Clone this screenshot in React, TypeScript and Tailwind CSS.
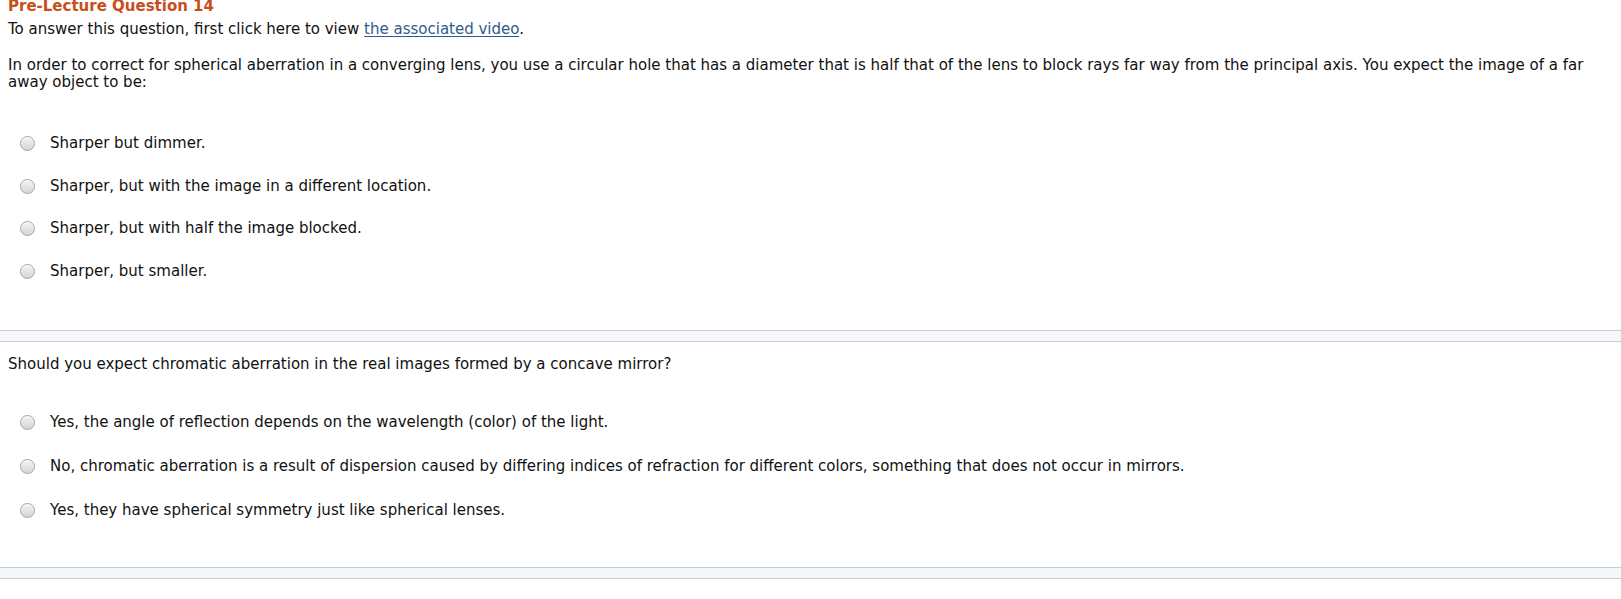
import React from "react";

const font = { fontFamily: '"DejaVu Sans", Verdana, sans-serif' };

type Question = {
  prompt: React.ReactNode;
  options: string[];
};

function Radio() {
  return (
    <span className="mb-[1px] ml-[20px] mr-[15px] h-[15px] w-[15px] shrink-0 rounded-full border border-[#a3a3a3] bg-gradient-to-b from-[#f3f3f3] to-[#d6d6d6] shadow-[inset_0_1px_1px_rgba(255,255,255,0.9)]" />
  );
}

function Options({ options, rowClass }: { options: string[]; rowClass: string }) {
  return (
    <div>
      {options.map((o) => (
        <label key={o} className={`flex items-center text-[15px] leading-[17.5px] text-[#111] ${rowClass}`}>
          <Radio />
          <span>{o}</span>
        </label>
      ))}
    </div>
  );
}

function Band() {
  return <div className="h-[12px] w-full border-y border-[#c7cdd7] bg-[#f4f8fb]" />;
}

export default function App() {
  const first: Question = {
    prompt: (
      <>
        In order to correct for spherical aberration in a converging lens, you use a circular hole that has a diameter
        that is half that of the lens to block rays far way from the principal axis. You expect the image of a far away
        object to be:
      </>
    ),
    options: [
      "Sharper but dimmer.",
      "Sharper, but with the image in a different location.",
      "Sharper, but with half the image blocked.",
      "Sharper, but smaller.",
    ],
  };

  const second: Question = {
    prompt: <>Should you expect chromatic aberration in the real images formed by a concave mirror?</>,
    options: [
      "Yes, the angle of reflection depends on the wavelength (color) of the light.",
      "No, chromatic aberration is a result of dispersion caused by differing indices of refraction for different colors, something that does not occur in mirrors.",
      "Yes, they have spherical symmetry just like spherical lenses.",
    ],
  };

  return (
    <div className="min-h-screen w-full overflow-hidden bg-white" style={font}>
      {/* Question 14 */}
      <div className="pb-[37px]">
        <div className="px-[8px]">
          <h2 className="text-[15px] font-bold leading-[12px] text-[#c84e1b]">Pre-Lecture Question 14</h2>
          <p className="mt-[9px] text-[15px] leading-[17.5px] text-[#111]">
            To answer this question, first click here to view{" "}
            <a href="#" className="text-[#2d5d8c] underline underline-offset-2">
              the associated video
            </a>
            .
          </p>
          <p className="mt-[18px] pr-[14px] text-[15px] leading-[17.6px] text-[#111]">{first.prompt}</p>
        </div>
        <div className="mt-[31px]">
          <Options options={first.options} rowClass="h-[42.6px]" />
        </div>
      </div>

      <Band />

      {/* Follow-up question */}
      <div className="pb-[34px] pt-[14px]">
        <p className="px-[8px] text-[15px] leading-[17.5px] text-[#111]">{second.prompt}</p>
        <div className="mt-[27px]">
          <Options options={second.options} rowClass="h-[44px]" />
        </div>
      </div>

      <Band />
    </div>
  );
}
